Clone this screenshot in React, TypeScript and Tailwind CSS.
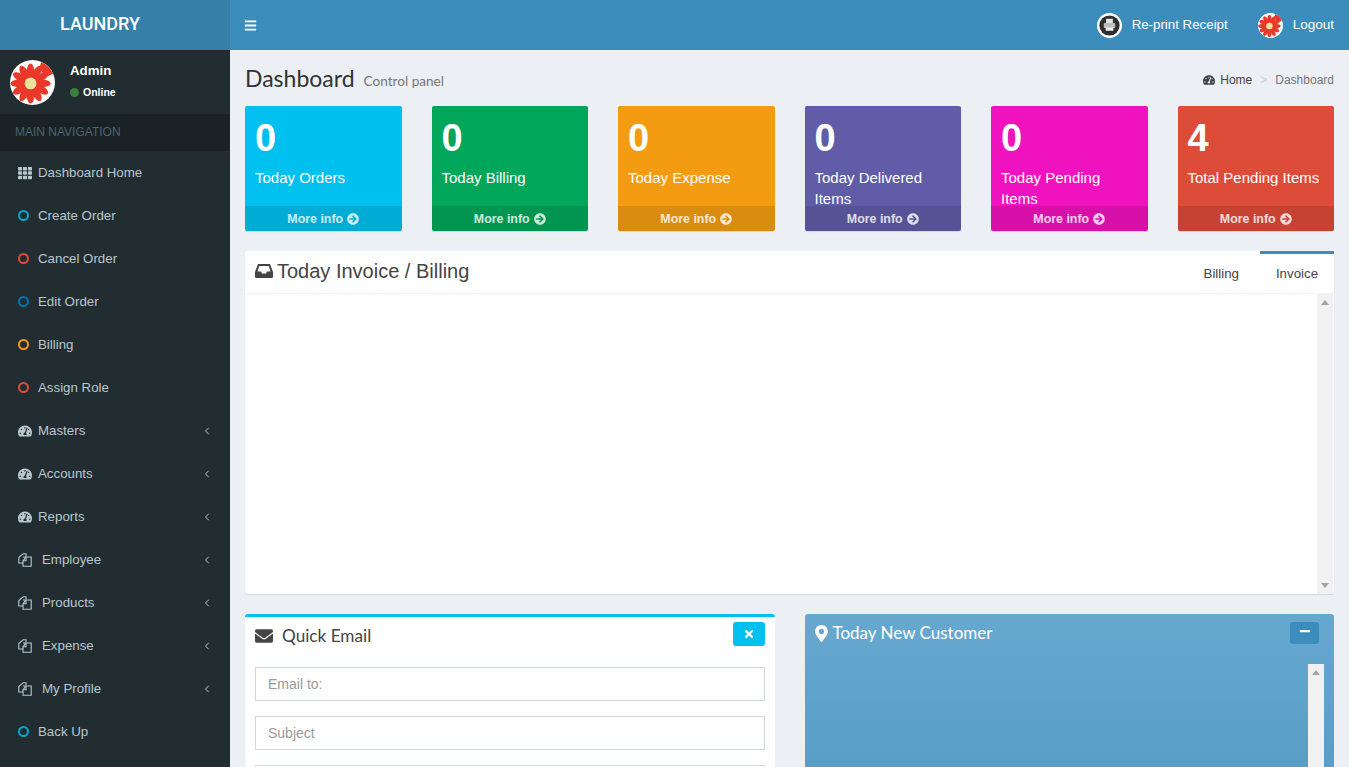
import React from 'react';
import { ChevronLeft } from 'lucide-react';
import {
  FaArrowCircleRight,
  FaBars,
  FaEnvelope,
  FaMapMarkerAlt,
  FaMinus,
  FaTachometerAlt,
  FaTh,
  FaTimes,
} from 'react-icons/fa';

const petals = Array.from({ length: 12 }, (_, i) => (i * 360) / 12);

const Flower = ({ className }: { className: string }) => (
  <svg viewBox="0 0 46 46" className={className}>
    <circle cx="23" cy="23" r="23" fill="#fff" />
    <path d="M32 2 A23 23 0 0 1 44 14 L36 18 L30 8 Z" fill="#e8392a" />
    {petals.map((a) => (
      <ellipse key={a} cx="21" cy="11.5" rx="3.8" ry="8" fill="#e8392a" transform={`rotate(${a} 21 24)`} />
    ))}
    <circle cx="21" cy="24" r="9" fill="#e8392a" />
    <circle cx="21" cy="24" r="6" fill="#e8e29a" />
  </svg>
);

const PrintBadge = () => (
  <svg viewBox="0 0 26 26" className="w-[25px] h-[25px]">
    <circle cx="13" cy="13" r="13" fill="#fff" />
    <circle cx="13" cy="13" r="10.5" fill="#2e2e2e" />
    <rect x="9.5" y="6" width="7" height="4.5" fill="#e4e4e4" />
    <rect x="7" y="10.5" width="12" height="5" rx="1" fill="#bdbdbd" />
    <rect x="9" y="15" width="8" height="3.5" fill="#f2f2f2" />
  </svg>
);

const FilesIcon = () => (
  <svg viewBox="0 0 14 14" className="w-[14px] h-[14px]" fill="none" stroke="#b8c7ce" strokeWidth="1.1">
    <path d="M5 0.8 H8 V3.5 M5 0.8 L0.8 4.6 V10 H5" />
    <path d="M5 4 H13.2 V13.2 H5 V7.8 L8 4" />
    <path d="M5 7.8 H8 V4" />
  </svg>
);

const InboxIcon = () => (
  <svg viewBox="0 0 18 16" className="w-[18px] h-[16px]" fill="#444">
    <path
      fillRule="evenodd"
      d="M3 1 H15 L18 9 V14 A1.2 1.2 0 0 1 16.8 15 H1.2 A1.2 1.2 0 0 1 0 14 V9 Z M4.3 3 L2.5 8.5 H6 L7 10.5 H11 L12 8.5 H15.5 L13.7 3 Z"
    />
  </svg>
);

type NavItem = {
  label: string;
  kind: 'grid' | 'circle' | 'gauge' | 'copy';
  color?: string;
  caret?: boolean;
};

const navItems: NavItem[] = [
  { label: 'Dashboard Home', kind: 'grid' },
  { label: 'Create Order', kind: 'circle', color: 'border-[#00a7d0]' },
  { label: 'Cancel Order', kind: 'circle', color: 'border-[#dd4b39]' },
  { label: 'Edit Order', kind: 'circle', color: 'border-[#0073b7]' },
  { label: 'Billing', kind: 'circle', color: 'border-[#f39c12]' },
  { label: 'Assign Role', kind: 'circle', color: 'border-[#dd4b39]' },
  { label: 'Masters', kind: 'gauge', caret: true },
  { label: 'Accounts', kind: 'gauge', caret: true },
  { label: 'Reports', kind: 'gauge', caret: true },
  { label: 'Employee', kind: 'copy', caret: true },
  { label: 'Products', kind: 'copy', caret: true },
  { label: 'Expense', kind: 'copy', caret: true },
  { label: 'My Profile', kind: 'copy', caret: true },
  { label: 'Back Up', kind: 'circle', color: 'border-[#00a7d0]' },
];

const stats = [
  { value: '0', label: 'Today Orders', bg: 'bg-[#00c0ef]' },
  { value: '0', label: 'Today Billing', bg: 'bg-[#00a65a]' },
  { value: '0', label: 'Today Expense', bg: 'bg-[#f39c12]' },
  { value: '0', label: 'Today Delivered Items', bg: 'bg-[#605ca8]' },
  { value: '0', label: 'Today Pending Items', bg: 'bg-[#f012be]' },
  { value: '4', label: 'Total Pending Items', bg: 'bg-[#dd4b39]' },
];

const Scrollbar = ({ className }: { className: string }) => (
  <div className={`w-4 flex flex-col justify-between items-center bg-[#f1f1f1] py-[6px] ${className}`}>
    <span className="w-0 h-0 border-x-[4px] border-x-transparent border-b-[5px] border-b-[#a3a3a3]" />
    <span className="w-0 h-0 border-x-[4px] border-x-transparent border-t-[5px] border-t-[#a3a3a3]" />
  </div>
);

const NavIcon = ({ item }: { item: NavItem }) => {
  if (item.kind === 'grid') return <FaTh className="text-[14px] text-[#b8c7ce]" />;
  if (item.kind === 'gauge') return <FaTachometerAlt className="text-[14px] text-[#b8c7ce]" />;
  if (item.kind === 'copy') return <FilesIcon />;
  return <span className={`block w-[11px] h-[11px] rounded-full border-2 ${item.color}`} />;
};

export default function App() {
  return (
    <div className="h-screen overflow-hidden flex flex-col bg-[#ecf0f5] text-[13.3px] text-[#333] font-['Liberation_Sans',Arial,sans-serif]">
      <header className="h-[50px] shrink-0 flex bg-[#3c8dbc] text-white">
        <div className="w-[230px] flex items-center justify-center pr-[30px] pb-[3px] bg-[#367fa9] text-[18px] font-medium font-['Roboto',sans-serif]">
          LAUNDRY
        </div>
        <div className="flex-1 flex items-center pl-[15px] pr-[15px]">
          <FaBars className="text-[13px] -ml-[1px]" />
          <div className="ml-auto flex items-center">
            <PrintBadge />
            <span className="ml-[10px] text-[13.3px]">Re-print Receipt</span>
            <Flower className="ml-[30px] w-[25px] h-[25px]" />
            <span className="ml-[10px] text-[13.5px]">Logout</span>
          </div>
        </div>
      </header>

      <div className="flex-1 min-h-0 flex">
        <aside className="w-[230px] shrink-0 bg-[#222d32] text-[#b8c7ce]">
          <div className="h-16 flex items-center pl-[10px]">
            <Flower className="w-[45px] h-[45px]" />
            <div className="ml-[15px] text-white -mt-[1px]">
              <div className="font-bold text-[13.3px] leading-[20px]">Admin</div>
              <div className="flex items-center mt-[1px] text-[10.5px] font-bold leading-[20px]">
                <span className="w-[9px] h-[9px] rounded-full bg-[#3d7f3d] mr-[4px]" />
                Online
              </div>
            </div>
          </div>
          <div className="h-[37px] flex items-center pl-[15px] pb-[2px] bg-[#1a2226] text-[12px] text-[#4b646f]">
            MAIN NAVIGATION
          </div>
          <ul>
            {navItems.map((item) => (
              <li key={item.label} className="h-[43px] flex items-center pl-[18px] pr-[17px]">
                <span className="w-[20px] flex items-center">
                  <NavIcon item={item} />
                </span>
                <span className={item.kind === 'copy' ? 'ml-[4px]' : ''}>{item.label}</span>
                {item.caret && <ChevronLeft size={12} strokeWidth={2} className="ml-auto text-[#b8c7ce]" />}
              </li>
            ))}
          </ul>
        </aside>

        <main className="flex-1 min-w-0 px-[15px] pt-[15px]">
          <div className="h-[26px] flex items-end">
            <h1 className="text-[23px] leading-[26px] text-[#333] font-['Lato',sans-serif]">Dashboard</h1>
            <span className="ml-[9px] text-[13.6px] leading-[20px] text-[#777] font-['Lato',sans-serif]">Control panel</span>
            <div className="ml-auto flex items-center text-[12px] leading-[18px] mb-[2px]">
              <FaTachometerAlt className="text-[12px] text-[#444]" />
              <span className="ml-[5px] text-[#444]">Home</span>
              <span className="mx-[8px] text-[#ccc]">&gt;</span>
              <span className="text-[#777]">Dashboard</span>
            </div>
          </div>

          <div className="mt-[15px] grid grid-cols-6 gap-x-[30px]">
            {stats.map((s) => (
              <div key={s.label} className={`h-[125px] rounded-[2px] flex flex-col overflow-hidden text-white shadow-[0_1px_1px_rgba(0,0,0,0.1)] ${s.bg}`}>
                <div className="flex-1 min-h-0 overflow-hidden pt-[11px] px-[10px]">
                  <div className="text-[38px] leading-[42px] font-bold">{s.value}</div>
                  <p className="mt-[8px] text-[15px] leading-[21px]">{s.label}</p>
                </div>
                <div className="h-[25px] shrink-0 flex items-center justify-center gap-[4px] pt-[1px] bg-black/10 text-[12.4px] font-bold text-white/80">
                  <span>More info</span>
                  <FaArrowCircleRight className="text-[12px]" />
                </div>
              </div>
            ))}
          </div>

          <section className="mt-5 h-[343px] flex flex-col rounded-[3px] bg-white shadow-[0_1px_1px_rgba(0,0,0,0.1)]">
            <div className="h-[43px] shrink-0 flex border-b border-[#f4f4f4]">
              <div className="flex items-center pl-[10px] pb-[2px] text-[20px] text-[#444]">
                <InboxIcon />
                <span className="ml-[4px]">Today Invoice / Billing</span>
              </div>
              <div className="ml-auto flex">
                <div className="flex items-center px-[21px] mt-[3px] text-[#444]">Billing</div>
                <div className="w-[74px] flex items-center justify-center border-t-[3px] border-[#3c8dbc] bg-white text-[#444]">
                  Invoice
                </div>
              </div>
            </div>
            <div className="flex-1 min-h-0 flex justify-end pr-[1px]">
              <Scrollbar className="h-full" />
            </div>
          </section>

          <div className="mt-5 grid grid-cols-2 gap-x-[30px] items-start">
            <section className="rounded-[3px] border-t-[3px] border-[#00c0ef] bg-white px-[10px]">
              <div className="h-[38px] flex items-center">
                <FaEnvelope className="text-[18px] text-[#444]" />
                <span className="ml-[9px] text-[17.2px] text-[#444] font-['Lato',sans-serif]">Quick Email</span>
                <button className="ml-auto -mt-[5px] w-8 h-6 flex items-center justify-center rounded-[3px] bg-[#00c0ef] text-white">
                  <FaTimes className="text-[12px]" />
                </button>
              </div>
              <div className="pt-[12px] flex flex-col gap-[15px]">
                <input placeholder="Email to:" className="h-[34px] w-full px-3 border border-[#d2d6de] text-[14px] outline-none placeholder:text-[#999]" />
                <input placeholder="Subject" className="h-[34px] w-full px-3 border border-[#d2d6de] text-[14px] outline-none placeholder:text-[#999]" />
                <input className="h-[34px] w-full px-3 border border-[#d2d6de] text-[14px] outline-none" />
              </div>
            </section>

            <section className="h-[420px] rounded-[3px] bg-gradient-to-b from-[#67a8ce] to-[#3c8dbc] text-white pl-[10px] pr-[10px]">
              <div className="h-[38px] flex items-center">
                <FaMapMarkerAlt className="text-[17px] -ml-[2px]" />
                <span className="ml-[3px] text-[17px] font-['Lato',sans-serif]">Today New Customer</span>
                <button className="ml-auto mr-[5px] -mt-[1px] w-[29px] h-[22px] flex items-start justify-center pt-[3px] rounded-[3px] bg-[#3c8dbc] text-white">
                  <FaMinus className="text-[12px]" />
                </button>
              </div>
              <div className="mt-3 flex justify-end">
                <Scrollbar className="h-[200px]" />
              </div>
            </section>
          </div>
        </main>
      </div>
    </div>
  );
}
